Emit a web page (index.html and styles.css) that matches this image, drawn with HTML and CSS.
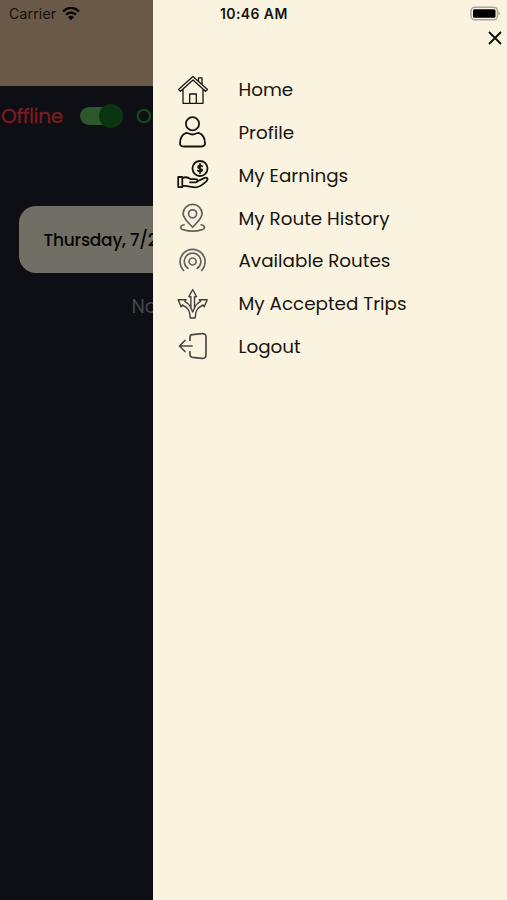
FILE: index.html
```html
<!DOCTYPE html>
<html lang="en">
<head>
<meta charset="utf-8">
<title>Driver menu</title>
<link rel="stylesheet" href="styles.css">
</head>
<body>
<div class="phone">
  <main class="page">
    <header class="header"></header>
    <div class="status-row">
      <span class="offline">Offline</span>
      <span class="switch"><span class="knob"></span></span>
      <span class="online">Online</span>
    </div>
    <div class="date-card">Thursday, 7/28</div>
    <p class="empty">No Routes</p>
  </main>
  <aside class="drawer">
    <button class="close" aria-label="Close"><svg width="16" height="16" viewBox="0 0 16 16"><path d="M2 2L14 14M14 2L2 14"/></svg></button>
    <nav class="menu">
      <a class="item"><svg class="icon thin" viewBox="0 0 32 32"><path d="M1.500 15.500L16 2.500L30.500 15.500L28.500 17.200L16 6L3.500 17.200ZM6 15V29.300H26V15M12.700 29V20H19.300V29M21.500 7.300V3.800H25V10.500"/></svg><span>Home</span></a>
      <a class="item"><svg class="icon bold" viewBox="0 0 32 32"><circle cx="15.500" cy="7.700" r="6.600"/><path d="M9.500 16.800C6 18 3 21.500 3 27.300C3 29.500 4.500 30.500 6.500 30.500H24.500C26.500 30.500 28 29.500 28 27.300C28 21.500 25 18 21.500 16.800C20.300 16.500 19 18.500 15.500 18.500S10.700 16.500 9.500 16.800Z"/></svg><span>Profile</span></a>
      <a class="item"><svg class="icon bold" viewBox="0 0 32 32"><circle cx="23" cy="9.500" r="7.500"/><path d="M25.100 7.300C24.300 6.200 21 6.200 21 8.100C21 10.100 25.200 9 25.200 11.100C25.200 12.900 21.900 12.900 20.800 11.500M23 5V14M1.200 18H5.300V28.100H1.200ZM5.300 19.300C8 17.800 11 18 13.500 20.100H18C21.500 20.100 21.300 23.300 18.500 23.300H13M20.500 22.300L27.200 19.100C30.500 17.800 31.500 20.300 29.300 22.300C26 25.300 23 28.300 18.500 28.300C13.500 28.300 10 26.100 5.300 27.100"/></svg><span>My Earnings</span></a>
      <a class="item"><svg class="icon soft" viewBox="0 0 32 32"><path d="M15.600 25.300C12.600 21.800 6.100 16.300 6.100 11.700A9.500 9.300 0 0 1 25.100 11.700C25.100 16.300 18.600 21.800 15.600 25.300Z"/><circle cx="15.600" cy="11.800" r="4"/><path d="M7.100 22.800C2.600 24 2.600 26.800 6.600 27.900C11.600 29.300 19.600 29.300 24.600 27.900C28.600 26.800 28.600 24 24.100 22.800"/></svg><span>My Route History</span></a>
      <a class="item"><svg class="icon soft" viewBox="0 0 32 32"><circle cx="15.600" cy="16.500" r="3.500"/><path d="M11.100 23.400A8.300 8.300 0 1 1 20.100 23.400M6.600 25.500A12.500 12.500 0 1 1 24.600 25.500"/></svg><span>Available Routes</span></a>
      <a class="item"><svg class="icon branch" viewBox="0 0 32 32"><path d="M15.700 1.500L19.500 8.700H17.500V20C18.700 16.800 20.700 15 23.500 13.500L22.200 11.700H30.200L27.300 18.800L26 17C20 20 18.200 23 18.200 30H13.200C13.200 23 11.400 20 5.400 17L4.100 18.800L1.200 11.700H9.200L7.900 13.500C10.700 15 12.700 16.800 13.900 20V8.700H11.900ZM13.900 20L15.700 24L17.500 20"/></svg><span>My Accepted Trips</span></a>
      <a class="item"><svg class="icon logout" viewBox="0 0 32 32"><path d="M13 10.200V7.200Q13 4.900 15.500 4.600L25 3.700Q29 3.400 29 7V25Q29 28.600 25 28.300L15.500 27.400Q13 27 13 24.800V21.800M15 16H2.500M8 10.500L2.500 16L8 21.500"/></svg><span>Logout</span></a>
    </nav>
  </aside>
  <div class="system-bar">
    <span class="carrier">Carrier</span>
    <svg class="wifi" width="18" height="14" viewBox="0 0 18 14"><path d="M1 4.500Q9-2.800 17 4.500M4 7.700Q9 3.200 14 7.700"/><path class="solid" d="M6 10Q9 7.400 12 10L9 13.200Z"/></svg>
    <span class="clock">10:46 AM</span>
    <svg class="battery" width="32" height="16" viewBox="0 0 32 16"><rect class="shell" x="1" y="1.200" width="26.500" height="12.600" rx="4"/><rect x="3" y="3.200" width="22.500" height="8.600" rx="1.500"/><path class="tip" d="M28.500 5.500Q31.500 7.500 28.500 9.500Z"/></svg>
  </div>
</div>
</body>
</html>
```
FILE: styles.css
```css
* { box-sizing: border-box; }
body { margin: 0; font-family: Poppins, Inter, sans-serif; }
.phone { position: relative; width: 507px; height: 900px; overflow: hidden; background: #0e0f14; }
.page { height: 900px; white-space: nowrap; }
.header { height: 86px; background: #6a5849; }
.status-row { display: flex; align-items: center; height: 60px; font-size: 20px; }
.offline { width: 80px; padding-left: 1px; color: #7c1c20; letter-spacing: -.3px; -webkit-text-stroke: .3px #7c1c20; }
.switch { display: flex; align-items: center; justify-content: flex-end; width: 43px; height: 18px; border-radius: 9px; background: #2d582d; }
.knob { width: 24px; height: 24px; flex: none; border-radius: 50%; background: #0b3510; }
.online { margin-left: 13px; color: #17491e; -webkit-text-stroke: .3px #17491e; }
.date-card { display: flex; align-items: center; width: 468px; height: 67px; margin: 60px 0 0 19px; padding-left: 24.500px; border-radius: 17px; background: #716e65; color: #050505; font-size: 17px; font-weight: 500; letter-spacing: -.2px; }
.empty { margin: 22px 0 0 131.500px; color: #44454a; font-size: 19px; line-height: 24px; }
.drawer { position: absolute; top: 0; right: 0; width: 354px; height: 900px; background: #faf3e0; }
.close { display: block; width: 16px; height: 16px; margin: 30px 4px 0 auto; padding: 0; border: 0; background: none; }
.close svg { display: block; fill: none; stroke: #111; stroke-width: 1.900; }
.menu { display: flex; flex-direction: column; margin: 22.300px 0 0 24px; }
.item { display: flex; align-items: center; gap: 29.500px; height: 42.800px; color: #171510; font-size: 18.350px; white-space: nowrap; }
.icon { width: 32px; height: 32px; flex: none; fill: none; stroke: #171510; stroke-linecap: round; stroke-linejoin: round; }
.thin { stroke-width: 1.300; }
.bold { stroke-width: 1.800; }
.soft { stroke: #65625c; stroke-width: 1.700; }
.branch { stroke: #45423d; stroke-width: 1.400; }
.logout { stroke: #4b4843; stroke-width: 1.700; }
.system-bar { position: absolute; top: 0; left: 0; display: grid; grid-template-columns: 53px 158px 1fr auto; align-items: center; width: 507px; height: 27px; padding: 0 5px 0 9px; font-family: Inter, sans-serif; font-size: 14px; color: #14110e; }
.carrier { letter-spacing: .2px; }
.wifi { fill: none; stroke: #080706; stroke-width: 2.300; }
.wifi .solid { fill: #080706; stroke: none; }
.clock { font-weight: 600; letter-spacing: .4px; }
.battery { fill: #000; }
.shell { fill: none; stroke: #aaa698; stroke-width: 1.500; }
.tip { fill: #aaa698; }
```
